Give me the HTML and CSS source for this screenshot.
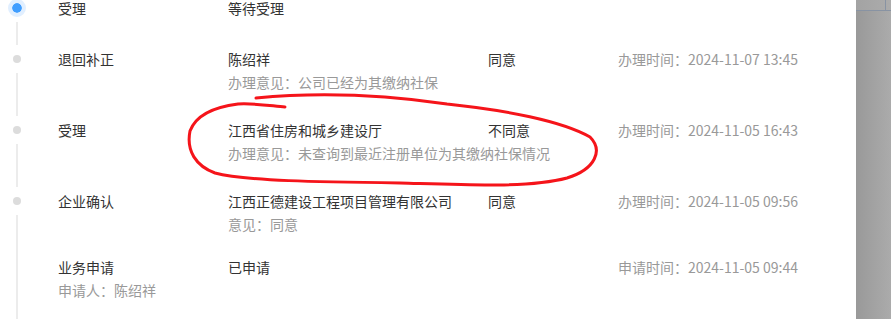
FILE: index.html
```html
<!DOCTYPE html>
<html lang="zh-CN">
<head>
<meta charset="utf-8">
<title>办理记录</title>
<link rel="stylesheet" href="styles.css">
</head>
<body>
<div class="page">
  <main class="main">
    <ul class="timeline">
      <li class="item item-first">
        <div class="gutter"><span class="dot dot-active"></span><span class="tail"></span></div>
        <div class="content content-first">
          <span class="c1">受理</span>
          <span class="c2">等待受理</span>
        </div>
      </li>
      <li class="item">
        <div class="gutter"><span class="dot"></span><span class="tail"></span></div>
        <div class="content">
          <span class="c1">退回补正</span>
          <span class="c2">陈绍祥</span>
          <span class="c3">同意</span>
          <span class="c4">办理时间：2024-11-07 13:45</span>
          <span class="sub sub-2">办理意见：公司已经为其缴纳社保</span>
        </div>
      </li>
      <li class="item">
        <div class="gutter"><span class="dot"></span><span class="tail"></span></div>
        <div class="content">
          <span class="c1">受理</span>
          <span class="c2">江西省住房和城乡建设厅</span>
          <span class="c3">不同意</span>
          <span class="c4">办理时间：2024-11-05 16:43</span>
          <span class="sub sub-2">办理意见：未查询到最近注册单位为其缴纳社保情况</span>
        </div>
      </li>
      <li class="item item-mid">
        <div class="gutter"><span class="dot"></span><span class="tail tail-joined"></span></div>
        <div class="content">
          <span class="c1">企业确认</span>
          <span class="c2">江西正德建设工程项目管理有限公司</span>
          <span class="c3">同意</span>
          <span class="c4">办理时间：2024-11-05 09:56</span>
          <span class="sub sub-2">意见：同意</span>
        </div>
      </li>
      <li class="item item-last">
        <div class="gutter"><span class="tail tail-full"></span></div>
        <div class="content">
          <span class="c1">业务申请</span>
          <span class="c2">已申请</span>
          <span class="c3"></span>
          <span class="c4">申请时间：2024-11-05 09:44</span>
          <span class="sub sub-1">申请人：陈绍祥</span>
        </div>
      </li>
    </ul>
    <svg class="mark" width="856" height="319" viewBox="0 0 856 319" aria-hidden="true">
      <path d="M256 98 C320 92 385 95 447 104 C505 110 562 121 590 137 C603 150 596 169 567 178 C530 188 470 185 400 183 C320 182 245 181 215 173 C196 166 186 151 190 131 C196 115 214 107 238 104 C255 103 272 106 285 107" fill="none" stroke="#f5141a" stroke-width="3" stroke-linecap="round" stroke-linejoin="round"/>
    </svg>
  </main>
  <aside class="side">
    <div class="side-top"><span class="side-cell"></span></div>
  </aside>
</div>
</body>
</html>
```

FILE: styles.css
```css
* { box-sizing: border-box; }
html, body {
  margin: 0;
  padding: 0;
  background: #fff;
  overflow: hidden;
}
body {
  font-family: "Noto Sans CJK SC", "Noto Sans", sans-serif;
  font-size: 14px;
  color: #333;
}
.page {
  display: flex;
  width: 891px;
  height: 319px;
}
.main {
  position: relative;
  flex: 0 0 856px;
  overflow: hidden;
}
.timeline {
  list-style: none;
  margin: 0;
  padding: 0;
}
.item {
  display: flex;
  min-height: 71px;
}
.item-first { min-height: 47px; }
.item-mid { min-height: 66px; }
.item-last { min-height: 72px; }
.gutter {
  flex: 0 0 34px;
  display: flex;
  flex-direction: column;
  align-items: center;
}
.dot {
  flex: 0 0 8px;
  width: 8px;
  height: 8px;
  margin-top: 8px;
  border-radius: 50%;
  background: #dcdcdc;
}
.dot-active {
  flex: 0 0 18px;
  width: 18px;
  height: 18px;
  margin-top: -1px;
  background: #409eff;
  border: 4px solid #e1efff;
  background-clip: padding-box;
}
.tail {
  flex: 1;
  width: 2px;
  margin: 10px 0 2px;
  background: #ececec;
}
.item-first .tail { margin-top: 5px; }
.tail-joined { margin-bottom: 0; }
.tail-full { margin: 0; }
.content {
  flex: 1;
  margin-left: 24px;
  display: grid;
  grid-template-columns: 170px 260px 130px auto;
  grid-template-rows: 24px 22px;
  align-content: start;
  line-height: 24px;
  color: #333;
}
.content-first {
  grid-template-rows: 16px;
  line-height: 16px;
}
.sub {
  grid-row: 2;
  line-height: 22px;
  color: #999;
  white-space: nowrap;
}
.sub-2 { grid-column: 2 / -1; }
.sub-1 { grid-column: 1 / -1; }
.c4 {
  color: #999;
  white-space: nowrap;
}
.c1, .c2, .c3 { white-space: nowrap; }
.mark {
  position: absolute;
  left: 0;
  top: 0;
  pointer-events: none;
}
.side {
  flex: 1;
  display: flex;
  flex-direction: column;
  background: linear-gradient(to right, #999999, #ababab);
}
.side-top {
  height: 11px;
  display: flex;
  justify-content: flex-end;
  border-bottom: 1px solid #8893a3;
  background: linear-gradient(to right, #a3a3a3, #acacac);
}
.side-cell {
  width: 6px;
  height: 100%;
  border-left: 1px solid #8893a3;
}
```
